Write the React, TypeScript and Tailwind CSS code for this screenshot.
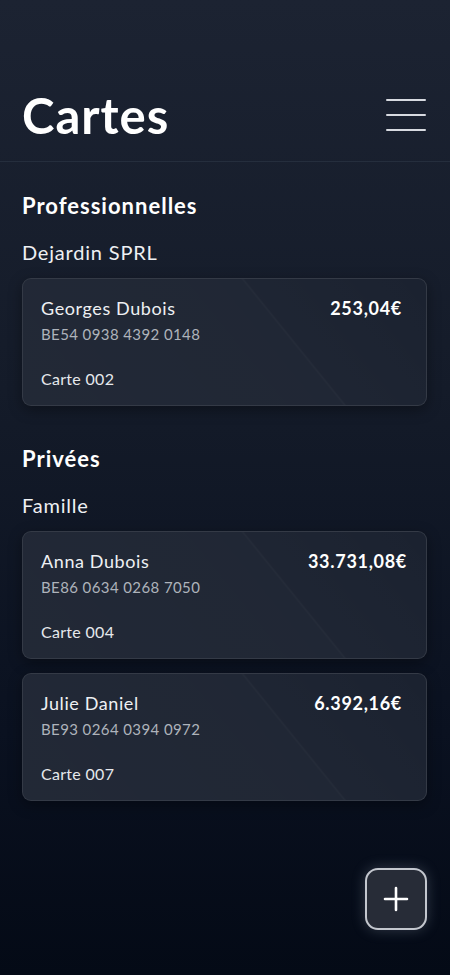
import React from "react";

type Card = { name: string; iban: string; label: string; amount: string; amtClass?: string };

function CardItem({ c }: { c: Card }) {
  return (
    <div className="relative rounded-[9px] border border-[rgba(255,255,255,0.11)] bg-[#1b2230] shadow-[0_4px_14px_rgba(0,0,0,0.35)] overflow-hidden">
      <div className="absolute inset-0 bg-[linear-gradient(51deg,rgba(255,255,255,0.03)_0%,rgba(255,255,255,0.022)_63.3%,rgba(255,255,255,0.045)_63.7%,rgba(255,255,255,0.014)_64.1%,rgba(255,255,255,0.0)_100%)]" />
      <div className="relative pl-[18px] pr-[24px] pt-[17px] pb-[15px]">
        <div className="flex justify-between items-start">
          <div className="text-[18px] leading-[24px] tracking-[0.6px] text-[#eef0f3]">{c.name}</div>
          <div className={"text-[18px] leading-[24px] tracking-[0.7px] font-bold text-white " + (c.amtClass ?? "")}>{c.amount}</div>
        </div>
        <div className="mt-[4px] text-[15px] leading-[20px] tracking-[0.4px] text-[#aeb3bb]">{c.iban}</div>
        <div className="mt-[24px] text-[16px] leading-[22px] tracking-[0.3px] text-[#e6e8ec]">{c.label}</div>
      </div>
    </div>
  );
}

export default function App() {
  return (
    <div
      className="relative w-[450px] h-[975px] overflow-hidden bg-[linear-gradient(180deg,#1c2332_0%,#141b29_40%,#0a1120_75%,#040a16_100%)] text-white"
      style={{ fontFamily: "Lato, 'Open Sans', sans-serif" }}
    >
      <header className="pt-[69px] border-b border-[#252e3d]">
        <div className="h-[92px] px-[22px] flex items-center justify-between">
          <h1 className="text-[49px] leading-[56px] font-bold text-white tracking-[1px]">Cartes</h1>
          <div className="w-[40px] flex flex-col gap-[12.5px] mr-[2px]">
            <div className="h-[2.5px] rounded-full bg-[#d7dae0]" />
            <div className="h-[2.5px] rounded-full bg-[#d7dae0]" />
            <div className="h-[2.5px] rounded-full bg-[#d7dae0]" />
          </div>
        </div>
      </header>

      <main className="pl-[22px] pr-[23px] pt-[30px]">
        <section>
          <h2 className="text-[22px] leading-[28px] font-bold tracking-[1px] text-white">Professionnelles</h2>
          <div className="mt-[18px] text-[20px] leading-[28px] tracking-[0.8px] text-[#eef0f3]">Dejardin SPRL</div>
          <div className="mt-[12px]">
            <CardItem c={{ name: "Georges Dubois", iban: "BE54 0938 4392 0148", label: "Carte 002", amount: "253,04€" }} />
          </div>
        </section>

        <section className="mt-[39px]">
          <h2 className="text-[22px] leading-[28px] font-bold tracking-[1px] text-white">Privées</h2>
          <div className="mt-[18px] text-[20px] leading-[28px] tracking-[0.8px] text-[#eef0f3]">Famille</div>
          <div className="mt-[12px] flex flex-col gap-[14px]">
            <CardItem c={{ name: "Anna Dubois", iban: "BE86 0634 0268 7050", label: "Carte 004", amount: "33.731,08€", amtClass: "-mr-[5px]" }} />
            <CardItem c={{ name: "Julie Daniel", iban: "BE93 0264 0394 0972", label: "Carte 007", amount: "6.392,16€" }} />
          </div>
        </section>
      </main>

      <button className="absolute right-[23px] bottom-[45px] w-[62px] h-[62px] rounded-[13px] border-2 border-[#c3c7ce] bg-[#272c37] shadow-[0_0_14px_rgba(180,190,210,0.25)] flex items-center justify-center">
        <svg width="26" height="26" viewBox="0 0 26 26" fill="none">
          <path d="M13 2v22M2 13h22" stroke="white" strokeWidth="2.6" strokeLinecap="round" />
        </svg>
      </button>
    </div>
  );
}
